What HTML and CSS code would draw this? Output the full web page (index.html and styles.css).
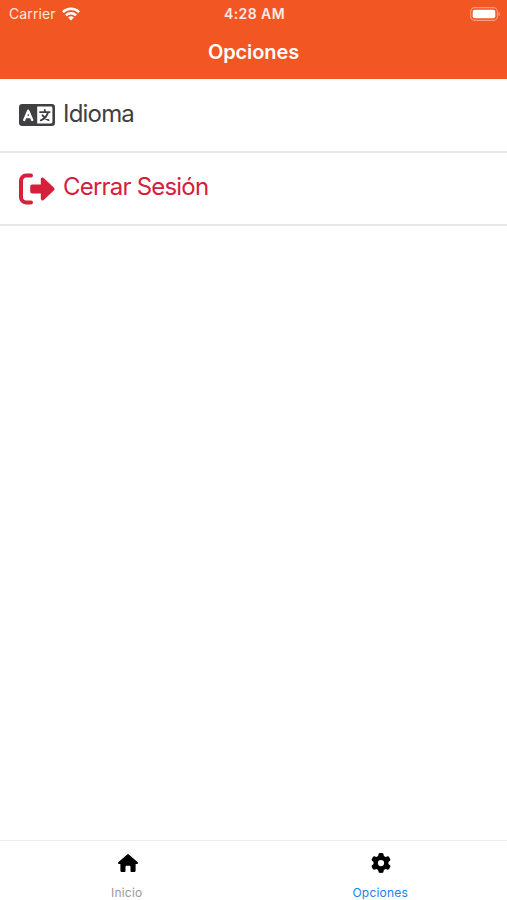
FILE: index.html
```html
<!DOCTYPE html>
<html lang="es">
<head>
<meta charset="utf-8">
<meta name="viewport" content="width=device-width, initial-scale=1">
<title>Opciones</title>
<link rel="stylesheet" href="styles.css">
</head>
<body>
<div class="app">
  <header class="header">
    <div class="status">
      <div class="carrier"><span>Carrier</span>
        <svg class="wifi" viewBox="0 0 18 14" fill="none" stroke="currentColor" stroke-width="2.5"><path d="M.9 5.2a11.5 11.5 0 0 1 16.2 0M3.9 8.4a7.2 7.2 0 0 1 10.2 0"/><path d="M6.1 10.6a4.1 4.1 0 0 1 5.8 0L9 13.6z" fill="currentColor" stroke="none"/></svg>
      </div>
      <time class="time">4:28 AM</time>
      <svg class="battery" viewBox="0 0 30 14"><rect x=".7" y=".7" width="26.6" height="12.6" rx="3.8" fill="none" stroke="#fff" stroke-opacity=".42" stroke-width="1.2"/><rect x="2.7" y="2.7" width="22.6" height="8.6" rx="2" fill="#fff"/><path d="M28.5 4.7c2 .8 2 3.8 0 4.6z" fill="#fff" fill-opacity=".42"/></svg>
    </div>
    <h1 class="title">Opciones</h1>
  </header>
  <main class="list">
    <a class="row">
      <svg class="row-icon language" viewBox="0 0 36 22">
        <rect width="36" height="22" rx="3.2" fill="currentColor"/>
        <path d="M18.2 2.6H32a1.4 1.4 0 0 1 1.4 1.4v14a1.4 1.4 0 0 1-1.4 1.4H18.2z" fill="#fff"/>
        <path d="M5.2 16 9.2 6.6 13.2 16M6.8 13h4.8" fill="none" stroke="#fff" stroke-width="2.3" stroke-linecap="round" stroke-linejoin="round"/>
        <path d="M21 8.1h9.6M25.8 6v2.1M29 8.3c-.9 3.9-3.5 6.6-7.2 8M23.5 11.2c1.4 2.4 3.4 4.1 6 5" fill="none" stroke="currentColor" stroke-width="1.9" stroke-linecap="round"/>
      </svg>
      <span>Idioma</span>
    </a>
    <a class="row danger">
      <svg class="row-icon logout" viewBox="0 0 36 32">
        <path d="M12 2.6H7a5 5 0 0 0-5 5v16.8a5 5 0 0 0 5 5h5" fill="none" stroke="currentColor" stroke-width="4" stroke-linecap="round"/>
        <path d="M13.2 11.6h8.6V6.4c0-1.6 1.7-2.4 2.9-1.3l10.1 9.5a1.9 1.9 0 0 1 0 2.800l-10.1 9.500c-1.2 1.1-2.9.3-2.9-1.3v-5.200h-8.6a2 2 0 0 1-2-2v-4.800a2 2 0 0 1 2-2z" fill="currentColor"/>
      </svg>
      <span>Cerrar Sesión</span>
    </a>
  </main>
  <nav class="tabs">
    <a class="tab">
      <svg class="tab-icon" viewBox="0 0 20 20"><path d="M9.2 1.400a1.2 1.2 0 0 1 1.6 0l8.7 7.7c.9.8.4 1.9-.6 1.9h-1.3v6.400c0 1-.8 1.700-1.7 1.700h-2.400c-.6 0-1-.4-1-1V14c0-.8-.5-1.300-1.2-1.300H8.700c-.7 0-1.200.5-1.200 1.300v4.100c0 .6-.4 1-1 1H4.100c-.9 0-1.700-.7-1.700-1.700V11H1.100C.1 11-.4 9.900.5 9.100z"/></svg>
      <span>Inicio</span>
    </a>
    <a class="tab active">
      <svg class="tab-icon" viewBox="0 0 512 512"><path d="M495.900 166.600c3.200 8.700.5 18.400-6.400 24.600l-43.300 39.400c1.100 8.300 1.700 16.800 1.700 25.400s-.6 17.100-1.700 25.400l43.300 39.400c6.900 6.200 9.600 15.900 6.400 24.600-4.400 11.900-9.700 23.300-15.800 34.300l-4.700 8.100c-6.600 11-14 21.400-22.100 31.200-5.900 7.200-15.700 9.600-24.500 6.800l-55.700-17.700c-13.400 10.300-28.200 18.900-44 25.400l-12.500 57.100c-2 9.100-9 16.300-18.200 17.800-13.800 2.300-28 3.500-42.500 3.500s-28.700-1.200-42.500-3.500c-9.200-1.500-16.200-8.700-18.200-17.800l-12.500-57.100c-15.800-6.500-30.600-15.100-44-25.400L83.100 425.900c-8.800 2.800-18.600.3-24.500-6.800-8.100-9.800-15.500-20.200-22.100-31.200l-4.700-8.100c-6.100-11-11.400-22.400-15.800-34.300-3.200-8.700-.5-18.400 6.400-24.600l43.300-39.400C64.600 273.100 64 264.600 64 256s.6-17.100 1.700-25.400L22.400 191.200c-6.900-6.200-9.600-15.900-6.400-24.600 4.400-11.900 9.700-23.300 15.800-34.300l4.700-8.100c6.600-11 14-21.400 22.100-31.200 5.900-7.200 15.700-9.600 24.500-6.800l55.700 17.700c13.400-10.300 28.200-18.900 44-25.400l12.500-57.100c2-9.100 9-16.300 18.200-17.800C227.300 1.200 241.500 0 256 0s28.700 1.200 42.500 3.500c9.200 1.500 16.200 8.700 18.200 17.800l12.500 57.100c15.800 6.500 30.600 15.100 44 25.400l55.700-17.700c8.800-2.800 18.600-.3 24.500 6.800 8.100 9.800 15.500 20.200 22.100 31.200l4.700 8.100c6.100 11 11.400 22.400 15.800 34.300zM256 336a80 80 0 1 0 0-160 80 80 0 1 0 0 160z"/></svg>
      <span>Opciones</span>
    </a>
  </nav>
</div>
</body>
</html>
```
FILE: styles.css
```css
body {
  margin: 0;
  background: #fff;
  font-family: Inter, "Liberation Sans", sans-serif;
}
.app {
  height: 900px;
  display: flex;
  flex-direction: column;
}
.header {
  box-sizing: border-box;
  height: 79px;
  background: #f15623;
  color: #fff;
}
.status {
  height: 27px;
  padding: 0 7px 0 9px;
  display: grid;
  grid-template-columns: 1fr auto 1fr;
  align-items: center;
  font-size: 14px;
}
.carrier {
  display: flex;
  align-items: center;
  gap: 6px;
  letter-spacing: 0.1px;
  color: #ffe6dc;
}
.wifi {
  width: 18px;
  height: 14px;
  color: #fff;
}
.time {
  font-weight: 600;
  letter-spacing: 0.45px;
  color: #ffeae2;
}
.battery {
  width: 30px;
  height: 14px;
  justify-self: end;
}
.title {
  margin: 0;
  text-align: center;
  font-size: 20px;
  font-weight: 600;
  line-height: 51px;
  letter-spacing: -0.1px;
}
.list {
  flex: 1;
  padding-top: 1px;
}
.row {
  box-sizing: border-box;
  height: 73px;
  padding: 0 19px;
  display: flex;
  align-items: center;
  gap: 8px;
  border-bottom: 2px solid #e7e7e7;
  color: #404042;
  font-size: 24px;
}
.row span {
  padding-bottom: 4px;
  letter-spacing: -0.8px;
}
.row-icon {
  width: 36px;
}
.language {
  height: 22px;
  margin-bottom: 2px;
}
.logout {
  height: 32px;
}
.danger {
  color: #d5203b;
}
.tabs {
  box-sizing: border-box;
  height: 60px;
  display: grid;
  grid-template-columns: 1fr 1fr;
  border-top: 1px solid #ececec;
}
.tab {
  display: flex;
  flex-direction: column;
  align-items: center;
  padding-top: 12px;
  gap: 12px;
  color: #999;
  font-size: 12px;
  line-height: 15px;
  letter-spacing: 0.2px;
}
.tab-icon {
  width: 20px;
  height: 20px;
  margin-left: 2px;
  fill: #000;
}
.active {
  color: #1683ec;
}
```
